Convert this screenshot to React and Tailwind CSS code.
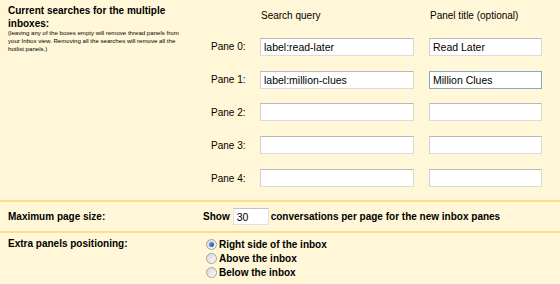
import React from "react";

const panes = [
  { query: "label:read-later", title: "Read Later" },
  { query: "label:million-clues", title: "Million Clues", focused: true },
  { query: "", title: "" },
  { query: "", title: "" },
  { query: "", title: "" },
];

function TextBox({ value, width, focused }) {
  return (
    <input
      type="text"
      defaultValue={value}
      readOnly
      className={`${width} h-[18px] bg-white pl-[3px] text-[10.5px] text-black outline-none border ${
        focused
          ? "border-[#8fa6bf]"
          : "border-[#dcdcdc] border-t-[#b9b9b9] border-l-[#cfcfcf]"
      }`}
    />
  );
}

function Radio({ checked, label }) {
  return (
    <div className="flex items-center h-[14px]">
      <span className="w-[11px] h-[11px] rounded-full border border-[#a4a4a4] bg-gradient-to-br from-[#d8d8d8] to-[#fafafa] flex items-center justify-center">
        {checked && (
          <span className="w-[5px] h-[5px] rounded-full bg-gradient-to-br from-[#6aa0e6] to-[#1d4f9c]" />
        )}
      </span>
      <span className="ml-[2px] font-bold">{label}</span>
    </div>
  );
}

export default function App() {
  return (
    <div className="w-[560px] h-[284px] overflow-hidden bg-[#fff7d7] text-black text-[10px] font-['Liberation_Sans',Arial,sans-serif]">
      <div className="flex h-[200px]">
        <div className="w-[200px] pl-2 pt-[4px]">
          <p className="font-bold text-[10px] leading-[13px]">
            Current searches for the multiple inboxes:
          </p>
          <p className="text-[6.1px] leading-[8px] mt-[-1px] pr-[14px]">
            (leaving any of the boxes empty will remove thread panels from your
            Inbox view. Removing all the searches will remove all the hotlist
            panels.)
          </p>
        </div>
        <div className="flex-1">
          <div className="h-[30.5px] flex pt-[10px] leading-[12px]">
            <span className="ml-[61px] w-[169px]">Search query</span>
            <span>Panel title (optional)</span>
          </div>
          {panes.map((p, i) => (
            <div key={i} className="h-[32.8px] flex items-center">
              <span className="w-[60px] pl-[11px]">Pane {i}:</span>
              <TextBox value={p.query} width="w-[154px]" />
              <span className="w-[15px]" />
              <TextBox value={p.title} width="w-[113px]" focused={p.focused} />
            </div>
          ))}
        </div>
      </div>
      <div className="h-[2px] bg-[#fbdd8e]" />
      <div className="flex items-center h-[29px]">
        <span className="w-[203px] pl-2 font-bold">Maximum page size:</span>
        <span className="font-bold">Show</span>
        <input
          type="text"
          defaultValue="30"
          readOnly
          className="ml-[3px] w-[36px] h-[17px] bg-white pl-[3px] text-[10.5px] outline-none border border-[#e2e2e2] border-t-[#c4c4c4]"
        />
        <span className="ml-[2px] font-bold">
          conversations per page for the new inbox panes
        </span>
      </div>
      <div className="h-[2px] bg-[#fbdd8e]" />
      <div className="flex pt-[4px]">
        <span className="w-[206px] pl-2 font-bold leading-[14px]">
          Extra panels positioning:
        </span>
        <div className="flex flex-col">
          <Radio checked label="Right side of the inbox" />
          <Radio label="Above the inbox" />
          <Radio label="Below the inbox" />
        </div>
      </div>
    </div>
  );
}
